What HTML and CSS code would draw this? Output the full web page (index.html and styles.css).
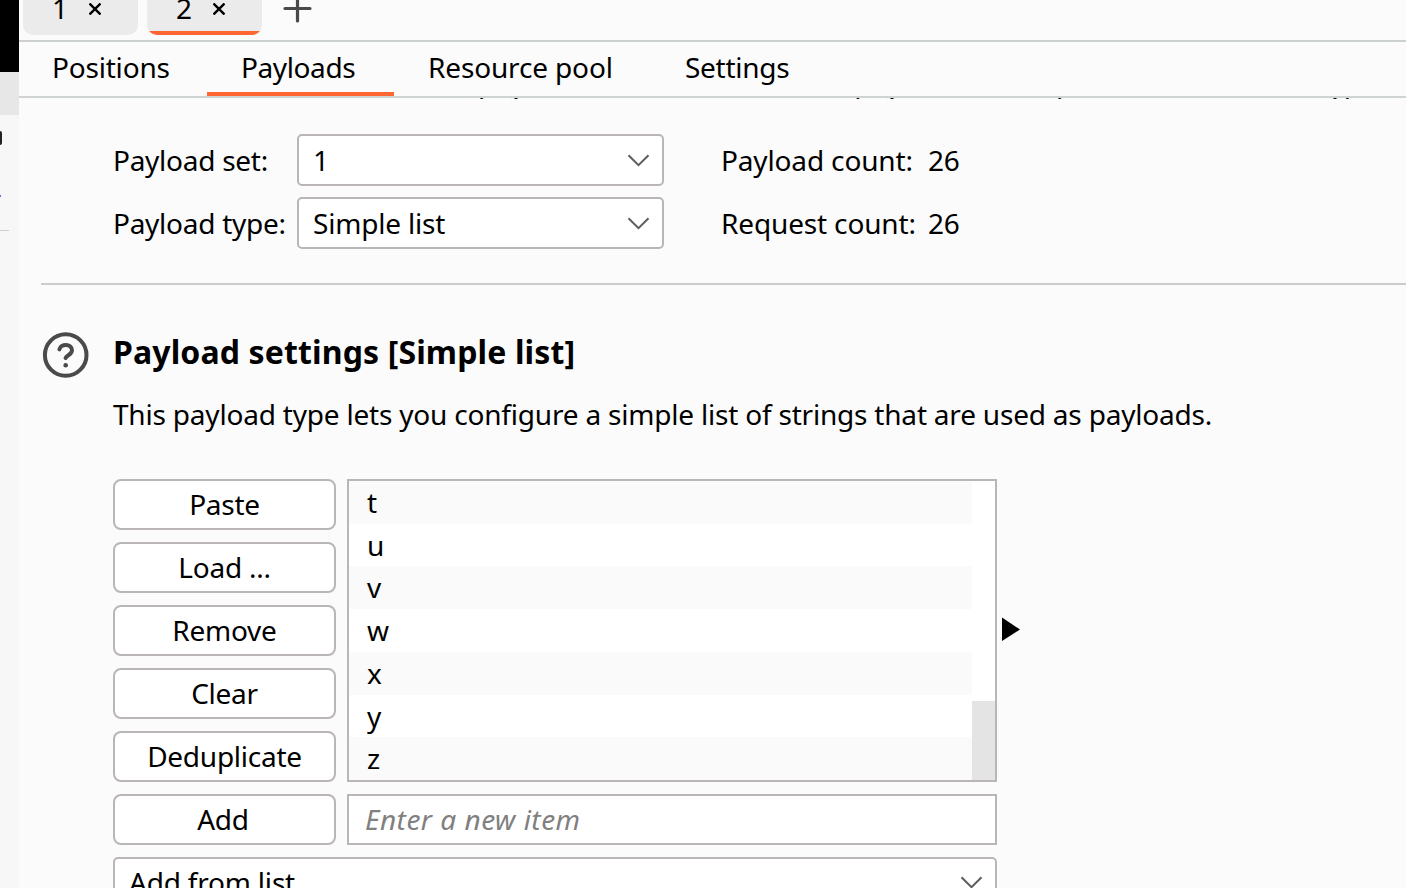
FILE: index.html
```
<!DOCTYPE html>
<html lang="en">
<head>
<meta charset="utf-8">
<title>Payloads</title>
<link rel="stylesheet" href="styles.css">
</head>
<body>
<div class="app">
  <aside class="edge">
    <div class="edge-dark"></div>
    <div class="edge-grey"></div>
    <div class="edge-body"><i class="edge-mark"></i><i class="edge-dot"></i><i class="edge-rule"></i></div>
  </aside>
  <main class="main">
    <nav class="attacks">
      <div class="attack"><span>1</span><svg class="close" viewBox="0 0 12 12"><path d="M0.5 0.5 11.5 11.5M11.5 0.5 0.5 11.5"/></svg></div>
      <div class="attack active"><span>2</span><svg class="close" viewBox="0 0 12 12"><path d="M0.5 0.5 11.5 11.5M11.5 0.5 0.5 11.5"/></svg></div>
      <svg class="plus" viewBox="0 0 28 28"><path d="M14.5 1.5V27M2 14.5H27"/></svg>
    </nav>
    <nav class="tabs">
      <div class="tab positions">Positions</div>
      <div class="tab payloads">Payloads</div>
      <div class="tab resource">Resource pool</div>
      <div class="tab settings">Settings</div>
    </nav>
    <div class="scrolled"><p class="intro">You can define one or more payload sets. The number of payload sets depends on the attack type defined</p></div>
    <section class="sets">
      <label class="label">Payload set:</label>
      <div class="select"><span>1</span><svg class="chev" viewBox="0 0 22 13"><path d="M1.5 1.2 11.5 11.2 21.5 1.2"/></svg></div>
      <span class="count">Payload count:</span><span class="num">26</span>
      <label class="label">Payload type:</label>
      <div class="select"><span>Simple list</span><svg class="chev" viewBox="0 0 22 13"><path d="M1.5 1.2 11.5 11.2 21.5 1.2"/></svg></div>
      <span class="count">Request count:</span><span class="num">26</span>
    </section>
    <section class="config">
      <svg class="help" viewBox="0 0 48 48"><circle cx="24.7" cy="24" r="20.8"/><path d="M18.4 18.4C19.6 12.4 30.8 12.2 31 19.2 31 23.6 25.6 24.2 24.6 27"/><circle class="dot" cx="24.7" cy="34.2" r="2.3"/></svg>
      <div class="config-body">
        <h2 class="title">Payload settings [Simple list]</h2>
        <p class="desc">This payload type lets you configure a simple list of strings that are used as payloads.</p>
        <div class="editor">
          <div class="buttons">
            <div class="btn">Paste</div>
            <div class="btn">Load ...</div>
            <div class="btn">Remove</div>
            <div class="btn">Clear</div>
            <div class="btn">Deduplicate</div>
            <div class="btn add">Add</div>
          </div>
          <div class="items">
            <div class="list">
              <div class="rows"><div>t</div><div>u</div><div>v</div><div>w</div><div>x</div><div>y</div><div>z</div></div>
              <div class="track"><div class="thumb"></div></div>
            </div>
            <div class="input">Enter a new item</div>
          </div>
          <svg class="arrow" viewBox="0 0 18 24"><path d="M0 0.5 18 12.5 0 24Z"/></svg>
        </div>
        <div class="select wide"><span>Add from list ...</span><svg class="chev" viewBox="0 0 22 13"><path d="M1.5 1.2 11.5 11.2 21.5 1.2"/></svg></div>
      </div>
    </section>
  </main>
</div>
</body>
</html>
```
FILE: styles.css
```
* { box-sizing: border-box; }
body { margin: 0; background: #fbfbfb; color: #000; font: 28px/40px "Noto Sans", "Open Sans", sans-serif; letter-spacing: -0.2px; white-space: nowrap; overflow: hidden; }
.app { display: flex; width: 1406px; height: 888px; overflow: hidden; }
.edge { width: 19px; flex: none; display: flex; flex-direction: column; background: #f7f7f7; }
.edge-dark { height: 72px; background: #000; }
.edge-grey { height: 43px; background: #e7e7e7; }
.edge-body { display: flex; flex-direction: column; align-items: flex-start; padding-top: 16px; }
.edge-mark { width: 2px; height: 14px; background: #222; border-radius: 0 2px 2px 0; }
.edge-dot { width: 1px; height: 2px; margin-top: 50px; background: #8a63d2; }
.edge-rule { width: 9px; height: 1px; margin-top: 33px; background: #d0d0d0; }
.main { width: 1387px; flex: none; }
.attacks { height: 42px; border-bottom: 2px solid #cbd0cf; display: flex; align-items: flex-start; padding-left: 4px; }
.attack { width: 115px; height: 35px; margin-right: 9px; background: #ebebeb; border-radius: 0 0 10px 10px; overflow: hidden; display: flex; padding-left: 29px; }
.attack span { width: 37px; margin-top: -12px; height: 40px; }
.attack.active { background: linear-gradient(#ebebeb 31px, #ff6633 31px); }
.close { width: 12px; height: 12px; margin-top: 3px; fill: none; stroke: #000; stroke-width: 2.4; }
.plus { width: 28px; height: 28px; margin: -6px 0 0 12px; fill: none; stroke: #4a4a4a; stroke-width: 3.2; stroke-linecap: round; overflow: visible; }
.tabs { height: 56px; border-bottom: 2px solid #cfd4d3; display: flex; }
.tab { height: 54px; padding-top: 5px; }
.positions { width: 188px; padding-left: 33px; }
.payloads { width: 187px; padding-left: 34px; border-bottom: 4px solid #ff6633; letter-spacing: -0.4px; }
.resource { width: 257px; padding-left: 34px; letter-spacing: -0.15px; }
.settings { padding-left: 34px; letter-spacing: -0.28px; }
.scrolled { height: 1px; overflow: hidden; padding-left: 94px; }
.intro { margin: -35px 0 0; letter-spacing: -0.19px; }
.sets { display: grid; grid-template-columns: 184px 367px 264px 60px; grid-auto-rows: 52px; row-gap: 11px; margin: 35px 0 0 22px; padding: 0 0 34px 72px; border-bottom: 2px solid #ccc; align-items: center; }
.label { letter-spacing: -0.27px; }
.count { padding-left: 57px; letter-spacing: -0.15px; }
.select { height: 52px; border: 2px solid #bab5b6; border-radius: 5px; background: #fff; display: flex; align-items: center; justify-content: space-between; padding: 0 13px 0 14px; }
.chev { width: 22px; height: 13px; fill: none; stroke: #5d5d5d; stroke-width: 2; overflow: visible; }
.config { display: flex; padding: 46px 0 0 22px; }
.help { width: 48px; height: 48px; flex: none; fill: none; stroke: #4a4a4a; stroke-width: 4; stroke-linecap: round; }
.help .dot { fill: #4a4a4a; stroke: none; }
.config-body { padding-left: 24px; }
.title { margin: -1px 0 0; font-size: 32px; line-height: 44px; letter-spacing: 0.13px; }
.desc { margin: 20px 0 0; }
.editor { display: flex; margin-top: 45px; }
.buttons { width: 223px; display: grid; grid-auto-rows: 51px; gap: 12px; }
.btn { border: 2px solid #bab5b6; border-radius: 8px; background: #fff; text-align: center; line-height: 47px; letter-spacing: -0.25px; }
.add { padding-right: 3px; }
.items { width: 650px; margin-left: 11px; }
.list { height: 303px; border: 2px solid #bab5b6; background: #fff; display: flex; }
.rows { width: 623px; display: grid; grid-template-rows: repeat(7, 1fr); }
.rows div { padding-left: 18px; line-height: 42px; }
.rows div:nth-child(odd) { background: #fafafa; }
.track { flex: 1; display: flex; flex-direction: column; justify-content: flex-end; }
.thumb { height: 79px; background: #e4e4e4; }
.input { height: 51px; margin-top: 12px; border: 2px solid #bab5b6; background: #fff; padding-left: 16px; line-height: 47px; color: #808080; font-style: italic; letter-spacing: 0.5px; }
.arrow { width: 18px; height: 24px; margin: 138px 0 0 5px; }
.wide { width: 884px; margin-top: 12px; }
.wide span { margin-top: -2px; letter-spacing: -0.2px; }
.wide .chev { margin-top: -2px; }
```
